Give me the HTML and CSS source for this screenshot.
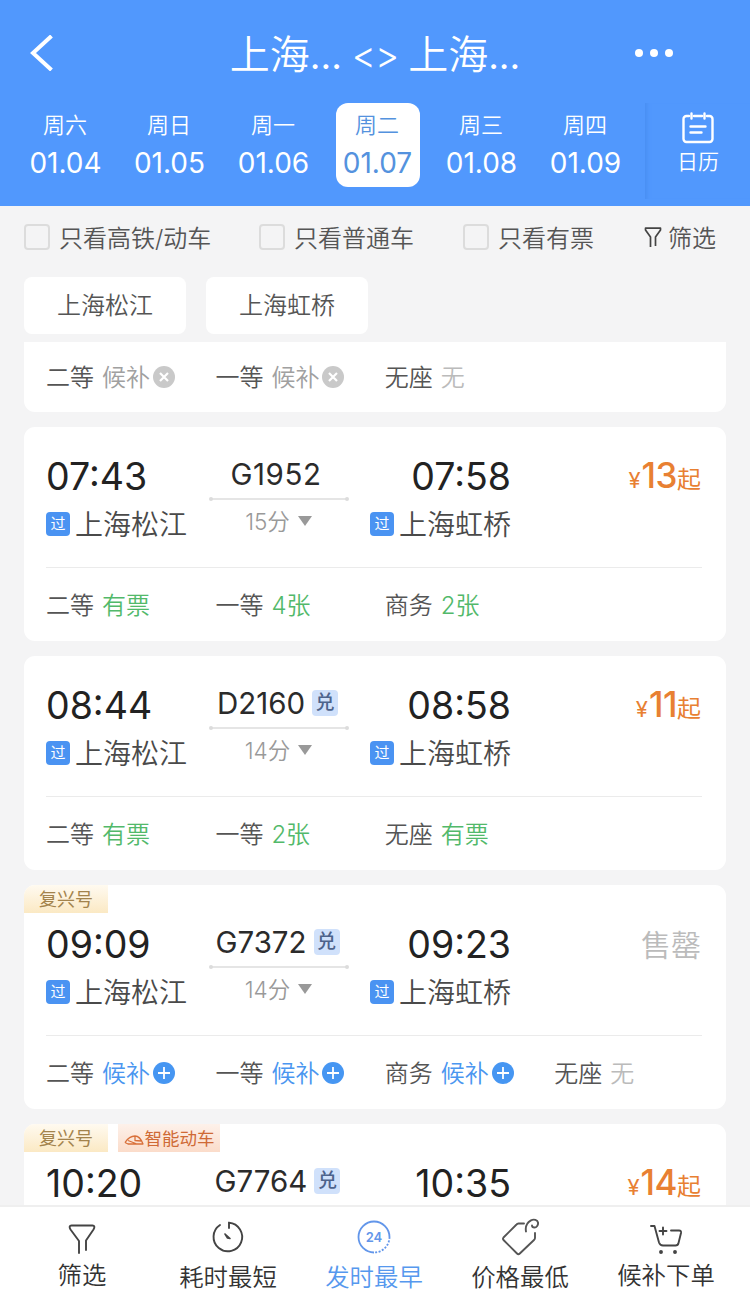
FILE: index.html
```
<!DOCTYPE html>
<html lang="zh-CN">
<head>
<meta charset="utf-8">
<title>车票查询</title>
<link rel="stylesheet" href="styles.css">
</head>
<body>
<svg class="defs" aria-hidden="true">
  <symbol id="cancel" viewBox="0 0 22 22"><circle cx="11" cy="11" r="11" fill="#c9c9c9"/><path d="M7 7l8 8M15 7l-8 8" stroke="#fff" stroke-width="2.2"/></symbol>
  <symbol id="plus" viewBox="0 0 22 22"><circle cx="11" cy="11" r="11" fill="#4696f2"/><path d="M11 5v12M5 11h12" stroke="#fff" stroke-width="1.8"/></symbol>
  <symbol id="route" viewBox="0 0 140 4"><path d="M2 2h136" stroke="#dcdcdc" stroke-width="1.5"/><circle cx="2" cy="2" r="2" fill="#dcdcdc"/><circle cx="138" cy="2" r="2" fill="#dcdcdc"/></symbol>
  <symbol id="tri" viewBox="0 0 14 10"><path d="M0 0h14L7 10z" fill="#999"/></symbol>
</svg>
<div class="app">
  <header class="header">
    <div class="titlebar">
      <svg class="back" viewBox="0 0 24 36"><path d="M21.500 1L3 18l18.500 17" fill="none" stroke="#fff" stroke-width="4"/></svg>
      <h1 class="title"><span>上海<b>...</b></span><span class="swap">&lt;&gt;</span><span>上海<b>...</b></span></h1>
      <svg class="more" viewBox="0 0 38 10"><circle cx="4" cy="5" r="4" fill="#fff"/><circle cx="19" cy="5" r="4" fill="#fff"/><circle cx="34" cy="5" r="4" fill="#fff"/></svg>
    </div>
    <nav class="dates">
      <div class="day"><span class="week">周六</span><span class="date">01.04</span></div>
      <div class="day"><span class="week">周日</span><span class="date">01.05</span></div>
      <div class="day"><span class="week">周一</span><span class="date">01.06</span></div>
      <div class="day active"><span class="week">周二</span><span class="date">01.07</span></div>
      <div class="day"><span class="week">周三</span><span class="date">01.08</span></div>
      <div class="day"><span class="week">周四</span><span class="date">01.09</span></div>
      <div class="calendar">
        <svg class="cal-icon" viewBox="0 0 32 32" fill="none" stroke="#fff" stroke-width="2.400" stroke-linecap="round"><path d="M7 4H4.500a3 3 0 0 0-3 3v20a3 3 0 0 0 3 3h23a3 3 0 0 0 3-3V7a3 3 0 0 0-3-3H25M12 4h8M9.500 1.500v5M22.500 1.500v5M8.500 14.500h15M8.500 20.500h11"/></svg>
        <span>日历</span>
      </div>
    </nav>
  </header>

  <section class="filters">
    <label class="check c1"><i class="box"></i><span>只看高铁/动车</span></label>
    <label class="check c2"><i class="box"></i><span>只看普通车</span></label>
    <label class="check c3"><i class="box"></i><span>只看有票</span></label>
    <div class="filter"><svg viewBox="0 0 18 20" fill="none" stroke="#444" stroke-width="1.700" stroke-linejoin="round"><path d="M6.500 20V10L1.500 3V1.200h15V3l-5 7v9"/></svg><span>筛选</span></div>
  </section>
  <section class="chips"><span class="chip">上海松江</span><span class="chip">上海虹桥</span></section>

  <main class="list">
    <article class="card partial">
      <div class="seats">
        <div class="seat">二等<span class="off">候补</span><svg class="mark"><use href="#cancel"/></svg></div>
        <div class="seat">一等<span class="off">候补</span><svg class="mark"><use href="#cancel"/></svg></div>
        <div class="seat">无座<span class="none">无</span></div>
      </div>
    </article>

    <article class="card">
      <div class="trip">
        <div class="stop"><div class="time">07:43</div><div class="station"><i class="pass">过</i>上海松江</div></div>
        <div class="train"><div class="no plain">G1952</div><svg class="route"><use href="#route"/></svg><div class="dur">15分<svg class="tri"><use href="#tri"/></svg></div></div>
        <div class="stop arrive"><div class="time">07:58</div><div class="station"><i class="pass">过</i>上海虹桥</div></div>
        <div class="price"><small class="yen">¥</small>13<small class="from">起</small></div>
      </div>
      <div class="seats">
        <div class="seat">二等<span class="ok">有票</span></div>
        <div class="seat">一等<span class="ok">4张</span></div>
        <div class="seat">商务<span class="ok">2张</span></div>
      </div>
    </article>

    <article class="card">
      <div class="trip">
        <div class="stop"><div class="time">08:44</div><div class="station"><i class="pass">过</i>上海松江</div></div>
        <div class="train"><div class="no">D2160<i class="redeem">兑</i></div><svg class="route"><use href="#route"/></svg><div class="dur">14分<svg class="tri"><use href="#tri"/></svg></div></div>
        <div class="stop arrive"><div class="time">08:58</div><div class="station"><i class="pass">过</i>上海虹桥</div></div>
        <div class="price"><small class="yen">¥</small>11<small class="from">起</small></div>
      </div>
      <div class="seats">
        <div class="seat">二等<span class="ok">有票</span></div>
        <div class="seat">一等<span class="ok">2张</span></div>
        <div class="seat">无座<span class="ok">有票</span></div>
      </div>
    </article>

    <article class="card tagged">
      <div class="tags"><span class="tag">复兴号</span></div>
      <div class="trip">
        <div class="stop"><div class="time">09:09</div><div class="station"><i class="pass">过</i>上海松江</div></div>
        <div class="train"><div class="no">G7372<i class="redeem">兑</i></div><svg class="route"><use href="#route"/></svg><div class="dur">14分<svg class="tri"><use href="#tri"/></svg></div></div>
        <div class="stop arrive"><div class="time">09:23</div><div class="station"><i class="pass">过</i>上海虹桥</div></div>
        <div class="price sold">售罄</div>
      </div>
      <div class="seats">
        <div class="seat">二等<span class="wait">候补</span><svg class="mark"><use href="#plus"/></svg></div>
        <div class="seat">一等<span class="wait">候补</span><svg class="mark"><use href="#plus"/></svg></div>
        <div class="seat">商务<span class="wait">候补</span><svg class="mark"><use href="#plus"/></svg></div>
        <div class="seat">无座<span class="none">无</span></div>
      </div>
    </article>

    <article class="card tagged">
      <div class="tags"><span class="tag">复兴号</span><span class="tag smart"><svg viewBox="0 0 20 10" fill="none" stroke="#d9703a" stroke-width="1.300" stroke-linejoin="round"><path d="M1 7.500C4 3 8 1 11 1c4 0 6.500 4 8 8H4L1 7.500M11 1v4.500l6 .5M4 5.500L13 9"/></svg>智能动车</span></div>
      <div class="trip">
        <div class="stop"><div class="time">10:20</div></div>
        <div class="train"><div class="no">G7764<i class="redeem">兑</i></div></div>
        <div class="stop arrive"><div class="time">10:35</div></div>
        <div class="price"><small class="yen">¥</small>14<small class="from">起</small></div>
      </div>
    </article>
  </main>

  <footer class="tabs">
    <div class="tab raised"><svg viewBox="0 0 34 34" fill="none" stroke="#444" stroke-width="1.900" stroke-linejoin="round" stroke-linecap="round"><path d="M14 33V21L5.500 9.500C4 7 4.500 5.500 6.500 5.500h21c2 0 2.500 1.500 1 4L21 20.500V30"/></svg><span>筛选</span></div>
    <div class="tab"><svg viewBox="0 0 34 34" fill="none" stroke="#444" stroke-width="1.900" stroke-linecap="round"><path d="M18 8V2.700A14.300 14.300 0 1 1 9 5"/><path d="M14 14l5 4.500-2.500-.5z" stroke-width="1.600" stroke-linejoin="round"/></svg><span>耗时最短</span></div>
    <div class="tab on"><svg viewBox="0 0 34 34" fill="none" stroke="#6296ea" stroke-width="1.800"><path d="M17 32.500A15.500 15.500 0 1 1 32.500 17"/><path d="M32.500 17A15.500 15.500 0 0 1 17 32.500" stroke-dasharray="2 1.500"/><text x="17" y="21.500" text-anchor="middle" class="hours">24</text></svg><span>发时最早</span></div>
    <div class="tab"><svg class="wide" viewBox="0 0 38 38" fill="none" stroke="#555" stroke-width="1.900" stroke-linejoin="round" stroke-linecap="round"><path d="M23 5.500h-5.500a3 3 0 0 0-2 1L2.500 19.500a2 2 0 0 0 0 2.500L16 35.500a2 2 0 0 0 2.800 0L33 22a3 3 0 0 0 1-2V15"/><path d="M25 13.500C24 8 27 4 30 2.300c3-1.500 6.500-.3 7 2.200s-1.500 5-3.500 5-2.500-1-2.500-2"/></svg><span>价格最低</span></div>
    <div class="tab raised"><svg viewBox="0 0 34 34" fill="none" stroke="#444" stroke-width="1.900" stroke-linejoin="round" stroke-linecap="round"><path d="M2 6h3.500L10 22.500q1 3 4 3h12.500q2.500 0 3-2.500L32 13q.5-2.500-2-2.500h-8M10.500 11h7M14 7.500v7"/><circle cx="12" cy="32" r="1" fill="#444"/><circle cx="26" cy="32" r="1" fill="#444"/></svg><span>候补下单</span></div>
  </footer>
</div>
</body>
</html>
```
FILE: styles.css
```
* { box-sizing: border-box; }
body {
  margin: 0;
  font-family: Inter, "Noto Sans CJK SC", sans-serif;
  font-weight: 350;
  font-size: 24px;
  color: #555;
  background: #f4f4f5;
}
i { font-style: normal; }
svg { display: block; flex: none; }
.defs { position: absolute; width: 0; height: 0; }
.app { width: 750px; height: 1303px; display: flex; flex-direction: column; overflow: hidden; }

.header { flex: none; height: 206px; background: #5198fd; color: #fff; }
.titlebar { height: 103px; padding: 2px 77px 0 30px; display: flex; align-items: center; justify-content: space-between; }
.back { width: 24px; height: 36px; }
.title { margin: 5px 0 0 61px; font-size: 40px; font-weight: 350; display: flex; align-items: center; gap: 10px; white-space: nowrap; line-height: 50px; }
.title b { font-size: 37px; font-weight: 400; }
.swap { font-size: 37px; letter-spacing: -1px; }
.more { width: 38px; height: 10px; }
.dates { display: flex; padding-left: 14px; }
.day { width: 84px; height: 84px; margin: 0 10px; border-radius: 12px; display: flex; flex-direction: column; align-items: center; padding-top: 7px; }
.active { background: #fff; color: #5492de; }
.week { font-size: 22px; line-height: 30px; margin-left: -2px; }
.date { font-size: 28px; font-weight: 400; line-height: 46px; margin-left: -1px; }
.calendar { flex: 1; height: 96px; padding: 9px 0 0 1px; margin-left: 7px; display: flex; flex-direction: column; align-items: center; font-size: 21px; line-height: 36px; box-shadow: inset 6px 0 5px -5px #468bee; }
.cal-icon { width: 32px; height: 32px; }

.filters { flex: none; height: 62px; display: flex; align-items: center; padding: 0 34px 0 24px; }
.filters span { margin-top: -2px; }
.check { display: flex; align-items: center; gap: 9px; white-space: nowrap; }
.c1 { width: 235px; }
.c2 { width: 204px; }
.c3 { width: 181px; }
.box { width: 26px; height: 26px; border: 2px solid #dcdcdc; border-radius: 4px; }
.filter { display: flex; align-items: center; gap: 6px; white-space: nowrap; }
.filter svg { width: 18px; height: 20px; }
.chips { flex: none; display: flex; gap: 20px; padding: 9px 24px 8px; }
.chip { width: 162px; height: 57px; line-height: 58px; text-align: center; background: #fff; border-radius: 8px; }

.list { flex: 1; min-height: 0; overflow: hidden; padding: 0 24px; }
.card { width: 702px; height: 214px; margin-bottom: 15px; background: #fff; border-radius: 11px; display: flex; flex-direction: column; overflow: hidden; }
.partial { height: 70px; border-radius: 0 0 11px 11px; }
.tagged { height: 224px; }
.tags { height: 28px; display: flex; gap: 10px; }
.tag { height: 28px; width: 84px; padding-bottom: 2px; display: flex; align-items: center; justify-content: center; font-size: 18px; font-weight: 400; color: #a3834c; background: linear-gradient(#fffaf0, #fbe9c4); }
.smart { width: 102px; gap: 1px; font-size: 17.500px; color: #cf6a36; background: linear-gradient(#fdf1ea, #fbdcca); }
.smart svg { width: 20px; height: 10px; margin-top: 5px; }
.trip { height: 141px; margin: 0 24px 0 22px; padding-top: 26px; display: grid; grid-template-columns: 163px 140px 162px 1fr; align-items: start; border-bottom: 1px solid #ebebeb; }
.tagged .trip { height: 123px; padding-top: 8px; }
.time { font-size: 37.500px; font-weight: 400; color: #222; line-height: 47px; }
.arrive { text-align: right; }
.station { margin-top: 8px; height: 34px; display: flex; align-items: center; gap: 5px; font-size: 28px; line-height: 34px; white-space: nowrap; color: #4a4a4a; }
.arrive .station { justify-content: flex-end; }
.pass { width: 24px; height: 24px; margin-top: -2px; border-radius: 4px; background: #4a93f2; color: #fff; font-size: 15px; font-weight: 400; line-height: 24px; text-align: center; }
.train { display: flex; flex-direction: column; align-items: center; }
.no { height: 44px; padding: 0 3px 2px 0; display: flex; align-items: center; gap: 7px; font-size: 29.500px; font-weight: 400; color: #2b2b2b; }
.plain { padding-right: 6px; letter-spacing: 0.6px; }
.redeem { width: 26px; height: 26px; border-radius: 4px; background: #d0e1fb; color: #4d638c; font-size: 19px; font-weight: 500; line-height: 25px; text-align: center; }
.route { width: 140px; height: 4px; }
.dur { height: 40px; padding: 0 1px 3px 0; display: flex; align-items: center; gap: 8px; font-size: 22.500px; color: #999; }
.tri { width: 14px; height: 10px; margin-top: 3px; }
.price { display: flex; align-items: baseline; justify-content: flex-end; padding-right: 1px; font-size: 35px; font-weight: 500; line-height: 44px; letter-spacing: -0.5px; color: #e88032; white-space: nowrap; }
.price small { font-size: 24px; font-weight: 400; letter-spacing: 0; }
.price .yen { font-size: 22px; margin-right: 1px; }
.sold { font-size: 30px; font-weight: 350; letter-spacing: 0; line-height: 49px; color: #bbb; }
.seats { flex: 1; padding: 2px 0 0 22px; display: flex; align-items: center; }
.seat { width: 169.400px; display: flex; align-items: center; white-space: nowrap; line-height: 34px; }
.seat span { margin-left: 8px; }
.mark { width: 22px; height: 22px; margin: -2px 0 0 3px; }
.off { color: #a0a0a0; }
.none { color: #bbb; }
.ok { color: #52b96a; }
.wait { color: #4a96f0; }

.tabs { flex: none; height: 98px; padding: 0 11px 0 9px; background: #fff; border-top: 2px solid #efefef; display: flex; }
.tab { width: 146px; padding-top: 13px; display: flex; flex-direction: column; align-items: center; font-size: 24.400px; line-height: 40px; color: #333; white-space: nowrap; }
.tab svg { width: 34px; height: 34px; margin-bottom: 3px; }
.tab svg.wide { width: 38px; height: 38px; margin: -2px 0 1px; }
.tab.raised svg { margin-bottom: 1px; }
.on { color: #5698ee; }
.hours { font-family: Inter, sans-serif; font-size: 13px; font-weight: 600; fill: #6296ea; stroke: none; }
```
